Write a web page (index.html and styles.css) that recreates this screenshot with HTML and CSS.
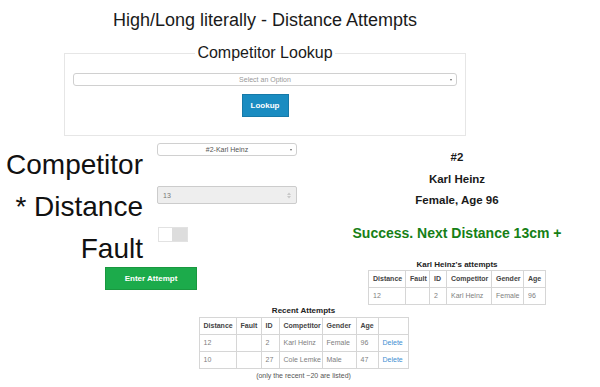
FILE: index.html
```html
<!DOCTYPE html>
<html lang="en">
<head>
    <meta charset="UTF-8">
    <title>High/Long literally - Distance Attempts</title>
    <link rel="stylesheet" href="styles.css">
</head>
<body>
    <div class="page">
        <h1 class="title">High/Long literally - Distance Attempts</h1>

        <fieldset class="lookup">
            <legend>Competitor Lookup</legend>
            <div class="select select-wide">
                <span class="placeholder">Select an Option</span>
                <span class="caret"></span>
            </div>
            <button class="btn btn-lookup">Lookup</button>
        </fieldset>

        <div class="entry">
            <div class="entry-form">
                <div class="form-grid">
                    <label>Competitor</label>
                    <div class="select">
                        <span>#2-Karl Heinz</span>
                        <span class="caret"></span>
                    </div>

                    <label>* Distance</label>
                    <div class="number">
                        <span>13</span>
                        <svg class="spin" width="4" height="7" viewBox="0 0 4 7">
                            <path d="M0 3 L2 0.5 L4 3 Z M0 4 L2 6.5 L4 4 Z" fill="#c8c8c8"/>
                        </svg>
                    </div>

                    <label>Fault</label>
                    <div class="toggle"><span class="knob"></span></div>
                </div>
                <button class="btn btn-enter">Enter Attempt</button>
            </div>

            <div class="entry-info">
                <div class="info-line">#2</div>
                <div class="info-line">Karl Heinz</div>
                <div class="info-line">Female, Age 96</div>
                <div class="success">Success. Next Distance 13cm +</div>

                <div class="table-title">Karl Heinz's attempts</div>
                <table class="grid-table own-table">
                    <colgroup>
                        <col class="w-dist"><col class="w-fault"><col class="w-id">
                        <col class="w-comp"><col class="w-gender"><col class="w-age">
                    </colgroup>
                    <tr><th>Distance</th><th>Fault</th><th>ID</th><th>Competitor</th><th>Gender</th><th>Age</th></tr>
                    <tr><td>12</td><td></td><td>2</td><td>Karl Heinz</td><td>Female</td><td>96</td></tr>
                </table>
            </div>
        </div>

        <div class="recent">
            <div class="table-title">Recent Attempts</div>
            <table class="grid-table recent-table">
                <colgroup>
                    <col class="w-dist"><col class="w-fault2"><col class="w-id2">
                    <col class="w-comp2"><col class="w-gender2"><col class="w-age">
                    <col class="w-del">
                </colgroup>
                <tr><th>Distance</th><th>Fault</th><th>ID</th><th>Competitor</th><th>Gender</th><th>Age</th><th></th></tr>
                <tr><td>12</td><td></td><td>2</td><td>Karl Heinz</td><td>Female</td><td>96</td><td><a href="#">Delete</a></td></tr>
                <tr><td>10</td><td></td><td>27</td><td>Cole Lemke</td><td>Male</td><td>47</td><td><a href="#">Delete</a></td></tr>
            </table>
            <p class="note">(only the recent ~20 are listed)</p>
        </div>
    </div>
</body>
</html>
```

FILE: styles.css
```css
/* Global Styling */
body {
    font-family: 'Liberation Sans', Arial, sans-serif;
    margin: 0;
    padding: 0;
    background: #ffffff;
    color: #222222;
}

.page {
    width: 600px;
}

.title {
    width: 530px;
    margin: 0;
    padding-top: 9px;
    font-size: 18px;
    font-weight: normal;
    line-height: 22px;
    text-align: center;
    color: #1a1a1a;
}

/* Lookup box */
.lookup {
    width: 384px;
    margin: 13px 0 0 64px;
    padding: 11px 8px 18px;
    border: 1px solid #e6e6e6;
}

.lookup legend {
    margin: 0 auto;
    padding: 0 2px;
    font-size: 16px;
    line-height: 18px;
    color: #1a1a1a;
}

.select {
    box-sizing: border-box;
    display: flex;
    align-items: center;
    justify-content: center;
    position: relative;
    height: 13px;
    border: 1px solid #d0d0d0;
    border-radius: 3px;
    font-size: 7px;
    color: #555555;
    background: #ffffff;
}

.select-wide {
    width: 384px;
}

.placeholder {
    color: #999999;
}

.caret {
    position: absolute;
    right: 4px;
    top: 5px;
    border-left: 1.5px solid transparent;
    border-right: 1.5px solid transparent;
    border-top: 2px solid #666666;
}

.btn {
    box-sizing: border-box;
    display: block;
    padding: 0;
    font-family: 'Liberation Sans', Arial, sans-serif;
    font-weight: bold;
    font-size: 8px;
    color: #ffffff;
    cursor: pointer;
}

.btn-lookup {
    width: 47px;
    height: 23px;
    margin: 8px auto 0;
    background: #1a8cc1;
    border: 1px solid #1679a8;
}

/* Attempt entry */
.entry {
    display: flex;
    margin-top: 7px;
}

.entry-form {
    width: 314px;
}

.form-grid {
    display: grid;
    grid-template-columns: 143px 140px;
    grid-template-rows: 42px 42px 40px;
    column-gap: 14px;
}

.form-grid label {
    padding-top: 2px;
    font-size: 28px;
    line-height: 40px;
    text-align: right;
    color: #111111;
    white-space: nowrap;
}

.form-grid .select {
    width: 140px;
}

.number {
    box-sizing: border-box;
    display: flex;
    align-items: center;
    justify-content: space-between;
    width: 140px;
    height: 18px;
    padding: 0 5px;
    margin-top: 1px;
    border: 1px solid #cccccc;
    border-radius: 2px;
    background: #eeeeee;
    font-size: 7px;
    color: #777777;
}

.toggle {
    box-sizing: border-box;
    display: flex;
    width: 30px;
    height: 15px;
    margin: 0 0 0 1px;
    border: 1px solid #e2e2e2;
    background: #dddddd;
}

.knob {
    width: 13px;
    height: 13px;
    background: #ffffff;
}

.btn-enter {
    width: 92px;
    height: 23px;
    margin-left: 105px;
    background: #1cab4b;
    border: 1px solid #19983f;
}

.entry-info {
    width: 286px;
    padding-top: 4px;
    text-align: center;
}

.info-line {
    font-size: 11.5px;
    font-weight: bold;
    line-height: 21.5px;
    color: #1a1a1a;
}

.success {
    margin-top: 11px;
    font-size: 14px;
    font-weight: bold;
    line-height: 20px;
    color: #168016;
}

/* Tables */
.table-title {
    font-size: 8px;
    font-weight: bold;
    line-height: 11px;
    color: #222222;
}

.entry-info .table-title {
    margin-top: 16px;
}

.grid-table {
    margin: 0 auto;
    border-collapse: collapse;
    table-layout: fixed;
    font-size: 7px;
    text-align: left;
}

.grid-table th,
.grid-table td {
    height: 16px;
    padding: 0 4px;
    border: 1px solid #d6d6d6;
    white-space: nowrap;
    overflow: hidden;
}

.grid-table th {
    color: #444444;
}

.grid-table td {
    color: #808080;
}

.grid-table a {
    color: #3f8fd2;
    text-decoration: none;
}

.own-table {
    width: 178px;
}

.recent-table {
    width: 209px;
    margin-top: 1px;
}

.w-dist { width: 37px; }
.w-fault { width: 24px; }
.w-id { width: 17px; }
.w-comp { width: 45px; }
.w-gender { width: 32px; }
.w-age { width: 22px; }
.w-fault2 { width: 25px; }
.w-id2 { width: 18px; }
.w-comp2 { width: 43px; }
.w-gender2 { width: 34px; }
.w-del { width: 30px; }

.recent {
    padding-left: 7px;
    text-align: center;
}

.note {
    margin: 2px 0 0;
    font-size: 7px;
    line-height: 10px;
    color: #555555;
}
```
